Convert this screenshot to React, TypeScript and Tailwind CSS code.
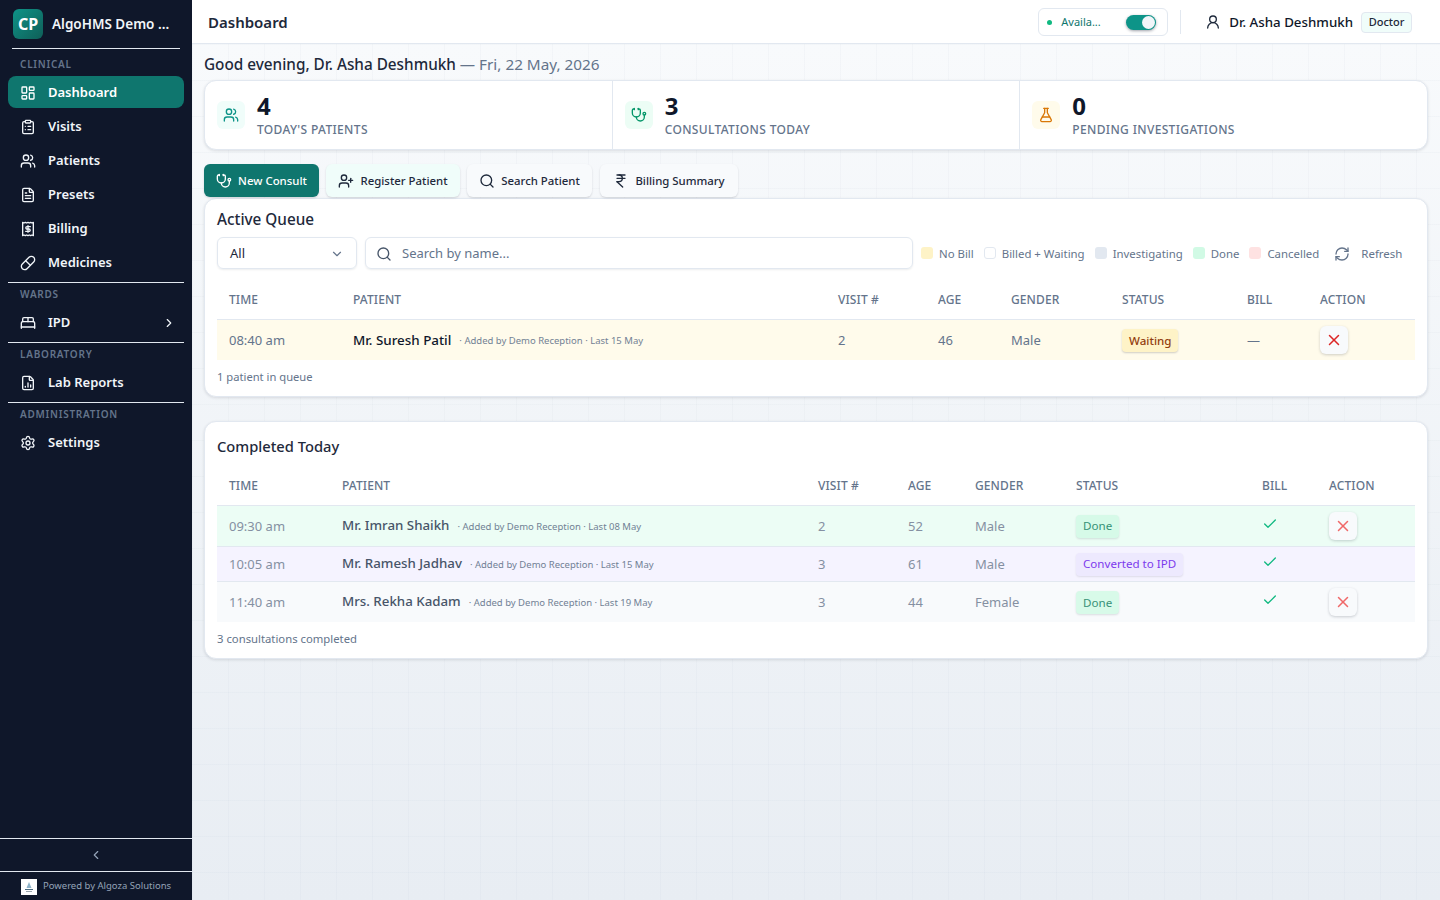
import React from 'react';
import {
  LayoutDashboard, ClipboardList, Users, FileText, Pill, BedDouble, ChevronRight, ChevronLeft, ChevronDown,
  FileChartColumn, Settings, UserRound, Stethoscope, FlaskConical, UserPlus, Search, IndianRupee, RefreshCw, X, Check,
} from 'lucide-react';

const BillingIcon = ({ size = 16 }: { size?: number }) => (
  <svg width={size} height={size} viewBox="0 0 24 24" fill="none" stroke="currentColor" strokeWidth="2" strokeLinecap="round" strokeLinejoin="round">
    <path d="M4 2v20l2-1 2 1 2-1 2 1 2-1 2 1 2-1 2 1V2l-2 1-2-1-2 1-2-1-2 1-2-1-2 1Z" />
    <path d="M15.5 8.5H10.5a1.75 1.75 0 0 0 0 3.5h3a1.75 1.75 0 0 1 0 3.5H8.5" />
    <path d="M12 17V7" />
  </svg>
);

const NavItem = ({ icon, label, active, right }: { icon: React.ReactNode; label: string; active?: boolean; right?: React.ReactNode }) => (
  <div className={`h-8 mb-[2px] pt-px rounded-lg flex items-center gap-3 px-3 text-[13px] font-semibold text-[#f1f5f9] ${active ? 'bg-[#0f766e] text-white' : ''}`}>
    {icon}
    <span className="flex-1">{label}</span>
    {right}
  </div>
);

const SectionLabel = ({ children }: { children: React.ReactNode }) => (
  <div className="h-[22px] pb-[2px] px-3 flex items-center text-[10px] font-semibold tracking-[0.75px] text-[#64748b]">{children}</div>
);

const Sidebar = () => (
  <aside className="w-[192px] shrink-0 h-[900px] bg-[#0f172a] flex flex-col">
    <div className="h-[49px] mx-3 flex items-center gap-[9px] border-b border-[#e2e8f0]">
      <div className="w-[30px] h-[30px] ml-[1px] rounded-md bg-gradient-to-br from-[#0d9488] to-[#0f5f58] text-white font-bold text-base flex items-center justify-center">CP</div>
      <span className="text-[13.5px] font-semibold text-[#f1f5f9] whitespace-nowrap">AlgoHMS Demo ...</span>
    </div>
    <div className="px-2 flex-1 pt-[5px]">
      <SectionLabel>CLINICAL</SectionLabel>
      <div>
        <NavItem active icon={<LayoutDashboard size={16} />} label="Dashboard" />
        <NavItem icon={<ClipboardList size={16} />} label="Visits" />
        <NavItem icon={<Users size={16} />} label="Patients" />
        <NavItem icon={<FileText size={16} />} label="Presets" />
        <NavItem icon={<BillingIcon />} label="Billing" />
        <NavItem icon={<Pill size={16} />} label="Medicines" />
      </div>
      <div className="border-t border-[#e2e8f0] mt-[4px] pt-[1px]">
        <SectionLabel>WARDS</SectionLabel>
        <NavItem icon={<BedDouble size={16} />} label="IPD" right={<ChevronRight size={14} className="-mr-1" />} />
      </div>
      <div className="border-t border-[#e2e8f0] mt-[4px] pt-[1px]">
        <SectionLabel>LABORATORY</SectionLabel>
        <NavItem icon={<FileChartColumn size={16} />} label="Lab Reports" />
      </div>
      <div className="border-t border-[#e2e8f0] mt-[4px] pt-[1px]">
        <SectionLabel>ADMINISTRATION</SectionLabel>
        <NavItem icon={<Settings size={16} />} label="Settings" />
      </div>
    </div>
    <div className="h-[33px] border-t border-[#e2e8f0] flex items-center justify-center text-[#94a3b8]">
      <ChevronLeft size={14} />
    </div>
    <div className="h-[29px] border-t border-[#e2e8f0] flex items-center gap-[6px] pl-[21px] pt-px">
      <div className="w-4 h-4 bg-white flex items-center justify-center">
        <svg width="12" height="12" viewBox="0 0 12 12">
          <path d="M6 1 L8.5 7 H3.5 Z" fill="#8fb3c9" />
          <rect x="2" y="8" width="8" height="1" fill="#4b6b80" />
          <rect x="3" y="10" width="6" height="1" fill="#9aa5ad" />
        </svg>
      </div>
      <span className="text-[9.5px] text-[#94a3b8] whitespace-nowrap">Powered by Algoza Solutions</span>
    </div>
  </aside>
);

const TopBar = () => (
  <header className="h-[44px] bg-white border-b border-[#e2e8f0] flex items-center pl-4 pr-7 pt-[1px]">
    <h1 className="text-[15px] font-semibold text-[#1e293b] flex-1 -translate-y-[0.5px]">Dashboard</h1>
    <div className="w-[130px] h-7 rounded-md border border-[#e2e8f0] bg-white flex items-center pl-[8px] pr-[11px]">
      <span className="w-[5px] h-[5px] rounded-full bg-[#10b981]" />
      <span className="ml-[9px] text-[11px] text-[#0f766e] flex-1">Availa...</span>
      <span className="w-[30px] h-[15px] rounded-full bg-[#0d9488] shadow-[0_1px_3px_rgba(15,23,42,0.4)] flex items-center justify-end pr-[1px]">
        <span className="w-[13px] h-[13px] rounded-full bg-[#f1f5f9]" />
      </span>
    </div>
    <div className="w-px h-6 bg-[#e2e8f0] ml-3 mr-[24px]" />
    <UserRound size={16} className="text-[#1e293b]" />
    <span className="ml-2 pt-px text-[13.3px] font-medium text-[#0f172a]">Dr. Asha Deshmukh</span>
    <span className="ml-2 h-[21px] w-[51px] justify-center rounded-[4px] border border-[#e2e8f0] bg-[#f0fdfa] text-[11px] font-medium text-[#1e293b] flex items-center">Doctor</span>
  </header>
);

const Stat = ({ icon, tint, value, label, first }: { icon: React.ReactNode; tint: string; value: string; label: string; first?: boolean }) => (
  <div className={`flex-1 flex items-center pl-3 gap-3 ${first ? '' : 'border-l border-[#e2e8f0]'}`}>
    <div className={`w-7 h-7 rounded-md flex items-center justify-center ${tint}`}>{icon}</div>
    <div>
      <div className="text-[24px] leading-[26px] font-bold text-[#0f172a] h-[29px]">{value}</div>
      <div className="text-xs leading-[16px] font-medium tracking-[0.35px] text-[#64748b] whitespace-nowrap">{label}</div>
    </div>
  </div>
);

const ActionButton = ({ icon, label, cls, w }: { icon: React.ReactNode; label: string; cls: string; w: string }) => (
  <button className={`h-[33px] rounded-md flex items-center justify-center gap-[6px] text-[11.4px] font-medium whitespace-nowrap shadow-[0_1px_2px_rgba(15,23,42,0.15)] ${cls} ${w}`}>
    {icon}
    {label}
  </button>
);

const Legend = ({ swatch, label }: { swatch: string; label: string }) => (
  <span className="flex items-center gap-[6px] pt-px text-[11.4px] text-[#64748b] whitespace-nowrap">
    <span className={`w-[12px] h-[12px] rounded-[3px] ${swatch}`} />
    {label}
  </span>
);

const Head = ({ children, w }: { children?: React.ReactNode; w: string }) => (
  <th className={`${w} px-3 pt-[2px] h-[39px] text-left align-middle text-xs font-medium tracking-[0.1px] text-[#64748b]`}>{children}</th>
);

const CancelBtn = ({ faded }: { faded?: boolean }) => (
  <span className="w-7 h-7 rounded-md bg-[#f8fafc] shadow-[0_1px_3px_rgba(15,23,42,0.2)] flex items-center justify-center">
    <X size={18} className={faded ? 'text-[#ef4444] opacity-80' : 'text-[#dc2626]'} />
  </span>
);

const Meta = ({ text, raised }: { text: string; raised?: boolean }) => (
  <span className={`ml-2 text-[9.5px] font-normal text-[#64748b] opacity-90 ${raised ? 'align-[1px]' : ''}`}>{text}</span>
);

type Row = { time: string; name: string; meta: string; visit: string; age: string; gender: string; status: string; action: boolean; bg: string; h: string; border: string };

const completed: Row[] = [
  { time: '09:30 am', name: 'Mr. Imran Shaikh', meta: '· Added by Demo Reception · Last 08 May', visit: '2', age: '52', gender: 'Male', status: 'Done', action: true, bg: 'bg-[#ecfdf5]', h: 'h-[41px]', border: 'border-b border-[#e2e8f0]' },
  { time: '10:05 am', name: 'Mr. Ramesh Jadhav', meta: '· Added by Demo Reception · Last 15 May', visit: '3', age: '61', gender: 'Male', status: 'Converted to IPD', action: false, bg: 'bg-[#f5f3ff]', h: 'h-[35px]', border: 'border-b border-[#e2e8f0]' },
  { time: '11:40 am', name: 'Mrs. Rekha Kadam', meta: '· Added by Demo Reception · Last 19 May', visit: '3', age: '44', gender: 'Female', status: 'Done', action: true, bg: 'bg-[#f8fafc]', h: 'h-[41px]', border: '' },
];

export default function App() {
  return (
    <div className="w-[1440px] h-[900px] overflow-hidden flex font-['Noto_Sans',sans-serif] bg-[#f1f5f9]">
      <Sidebar />
      <div className="flex-1 min-w-0 flex flex-col">
        <TopBar />
        <main className="flex-1 px-3 bg-[linear-gradient(rgba(148,163,184,0.05)_1px,transparent_1px),linear-gradient(90deg,rgba(148,163,184,0.05)_1px,transparent_1px),linear-gradient(180deg,#f8fafc,#e8edf3)] bg-[size:36px_36px,36px_36px,100%_100%]">
          <p className="h-[36px] pt-[8px] text-[15.3px] leading-6 whitespace-nowrap font-medium text-[#1e293b]">
            Good evening, Dr. Asha Deshmukh <span className="font-normal text-[#64748b]">— Fri, 22 May, 2026</span>
          </p>

          <section className="h-[70px] bg-white rounded-xl border border-[#e2e8f0] shadow-[0_1px_3px_rgba(15,23,42,0.12)] flex">
            <Stat first tint="bg-[#f0fdfa]" icon={<Users size={16} className="text-[#0d9488]" />} value="4" label="TODAY'S PATIENTS" />
            <Stat tint="bg-[#ecfdf5]" icon={<Stethoscope size={16} className="text-[#059669]" />} value="3" label="CONSULTATIONS TODAY" />
            <Stat tint="bg-[#fffbeb]" icon={<FlaskConical size={16} className="text-[#d97706]" />} value="0" label="PENDING INVESTIGATIONS" />
          </section>

          <div className="flex gap-[7px] mt-[14px]">
            <ActionButton w="w-[115px]" cls="bg-[#0f766e] text-white" icon={<Stethoscope size={16} />} label="New Consult" />
            <ActionButton w="w-[134px]" cls="bg-[#f0fdfa] text-[#1e293b]" icon={<UserPlus size={16} />} label="Register Patient" />
            <ActionButton w="w-[125px]" cls="bg-[#f8fafc] text-[#1e293b]" icon={<Search size={16} />} label="Search Patient" />
            <ActionButton w="w-[138px] ml-px" cls="bg-[#f8fafc] text-[#1e293b]" icon={<IndianRupee size={16} />} label="Billing Summary" />
          </div>

          <section className="mt-px h-[199px] bg-white rounded-xl border border-[#e2e8f0] shadow-[0_1px_3px_rgba(15,23,42,0.12)] px-3">
            <h2 className="h-[38px] pt-[8px] text-[15.3px] leading-6 font-medium text-[#1e293b]">Active Queue</h2>
            <div className="flex items-center h-[32px]">
              <div className="w-[140px] shrink-0 h-[32px] rounded-md border border-[#e2e8f0] shadow-[0_1px_2px_rgba(15,23,42,0.08)] flex items-center justify-between px-3 pt-px text-[13px] text-[#1e293b]">
                All
                <ChevronDown size={14} className="text-[#64748b]" />
              </div>
              <div className="ml-2 w-[548px] shrink-0 h-[32px] rounded-md border border-[#e2e8f0] shadow-[0_1px_2px_rgba(15,23,42,0.08)] flex items-center gap-[10px] px-[10px] pt-px text-[13px] text-[#64748b]">
                <Search size={16} className="text-[#475569]" />
                Search by name...
              </div>
              <div className="ml-2 flex items-center gap-[10px]">
                <Legend swatch="bg-[#fef3c7]" label="No Bill" />
                <Legend swatch="bg-white border border-[#e2e8f0]" label="Billed + Waiting" />
                <Legend swatch="bg-[#e2e8f0]" label="Investigating" />
                <Legend swatch="bg-[#d1fae5]" label="Done" />
                <Legend swatch="bg-[#fee2e2]" label="Cancelled" />
              </div>
              <span className="ml-[15px] flex items-center gap-[11px] pt-px text-[11.5px] text-[#64748b] whitespace-nowrap">
                <RefreshCw size={16} />
                Refresh
              </span>
            </div>
            <table className="w-[1198px] mt-[11px] table-fixed border-collapse">
              <thead>
                <tr className="border-b border-[#e2e8f0]">
                  <Head w="w-[124px]">TIME</Head>
                  <Head w="w-[485px]">PATIENT</Head>
                  <Head w="w-[100px]">VISIT #</Head>
                  <Head w="w-[73px]">AGE</Head>
                  <Head w="w-[111px]">GENDER</Head>
                  <Head w="w-[125px]">STATUS</Head>
                  <Head w="w-[73px]">BILL</Head>
                  <Head w="w-[107px]">ACTION</Head>
                </tr>
              </thead>
              <tbody>
                <tr className="h-[41px] bg-[#fffbeb] text-[13px] text-[#64748b]">
                  <td className="px-3 pt-[2px]">08:40 am</td>
                  <td className="px-3 pt-px whitespace-nowrap">
                    <span className="text-[13.4px] font-medium text-[#0f172a]">Mr. Suresh Patil</span>
                    <Meta raised text="· Added by Demo Reception · Last 15 May" />
                  </td>
                  <td className="px-3 pt-[2px]">2</td>
                  <td className="px-3 pt-[2px]">46</td>
                  <td className="px-3 pt-[2px]">Male</td>
                  <td className="px-3 pt-px">
                    <span className="inline-flex items-center h-[23px] px-[7px] rounded-[4px] bg-[#fef3c7] text-[11.6px] font-medium text-[#92400e] shadow-[0_1px_2px_rgba(15,23,42,0.2)]">Waiting</span>
                  </td>
                  <td className="px-3 pt-px">—</td>
                  <td className="px-3"><CancelBtn /></td>
                </tr>
              </tbody>
            </table>
            <p className="mt-[9px] text-[11.2px] leading-4 text-[#64748b]">1 patient in queue</p>
          </section>

          <section className="mt-[24px] h-[238px] bg-white rounded-xl border border-[#e2e8f0] shadow-[0_1px_3px_rgba(15,23,42,0.12)] px-3">
            <h2 className="h-[44px] pt-[12px] text-[14.7px] leading-6 font-medium text-[#1e293b]">Completed Today</h2>
            <table className="w-[1198px] table-fixed border-collapse">
              <thead>
                <tr className="border-b border-[#e2e8f0]">
                  <Head w="w-[113px]">TIME</Head>
                  <Head w="w-[476px]">PATIENT</Head>
                  <Head w="w-[90px]">VISIT #</Head>
                  <Head w="w-[67px]">AGE</Head>
                  <Head w="w-[101px]">GENDER</Head>
                  <Head w="w-[186px]">STATUS</Head>
                  <Head w="w-[67px]">BILL</Head>
                  <Head w="w-[98px]">ACTION</Head>
                </tr>
              </thead>
              <tbody>
                {completed.map((r) => (
                  <tr key={r.time} className={`${r.h} ${r.bg} ${r.border} text-[13px] text-[#8590a2]`}>
                    <td className="px-3 pt-[2px]">{r.time}</td>
                    <td className="px-3 pt-px whitespace-nowrap">
                      <span className="text-[13.3px] font-medium text-[#475569]">{r.name}</span>
                      <Meta text={r.meta} />
                    </td>
                    <td className="px-3 pt-[2px]">{r.visit}</td>
                    <td className="px-3 pt-[2px]">{r.age}</td>
                    <td className="px-3 pt-[2px]">{r.gender}</td>
                    <td className="px-3 pt-px">
                      {r.status === 'Done' ? (
                        <span className="inline-flex items-center h-[23px] px-[7px] rounded-[4px] bg-[#d1fae5] text-[11.6px] text-[#047857] opacity-80 shadow-[0_1px_2px_rgba(15,23,42,0.15)]">Done</span>
                      ) : (
                        <span className="inline-flex items-center h-[23px] px-[7px] rounded-[4px] bg-[#ede9fe] text-[11.6px] text-[#7c3aed] shadow-[0_1px_2px_rgba(15,23,42,0.1)]">{r.status}</span>
                      )}
                    </td>
                    <td className="px-3"><Check size={16} className="text-[#10b981] -translate-y-[2px]" /></td>
                    <td className="px-3">{r.action && <CancelBtn faded />}</td>
                  </tr>
                ))}
              </tbody>
            </table>
            <p className="mt-[9px] text-[11.3px] leading-4 text-[#64748b]">3 consultations completed</p>
          </section>
        </main>
      </div>
    </div>
  );
}
